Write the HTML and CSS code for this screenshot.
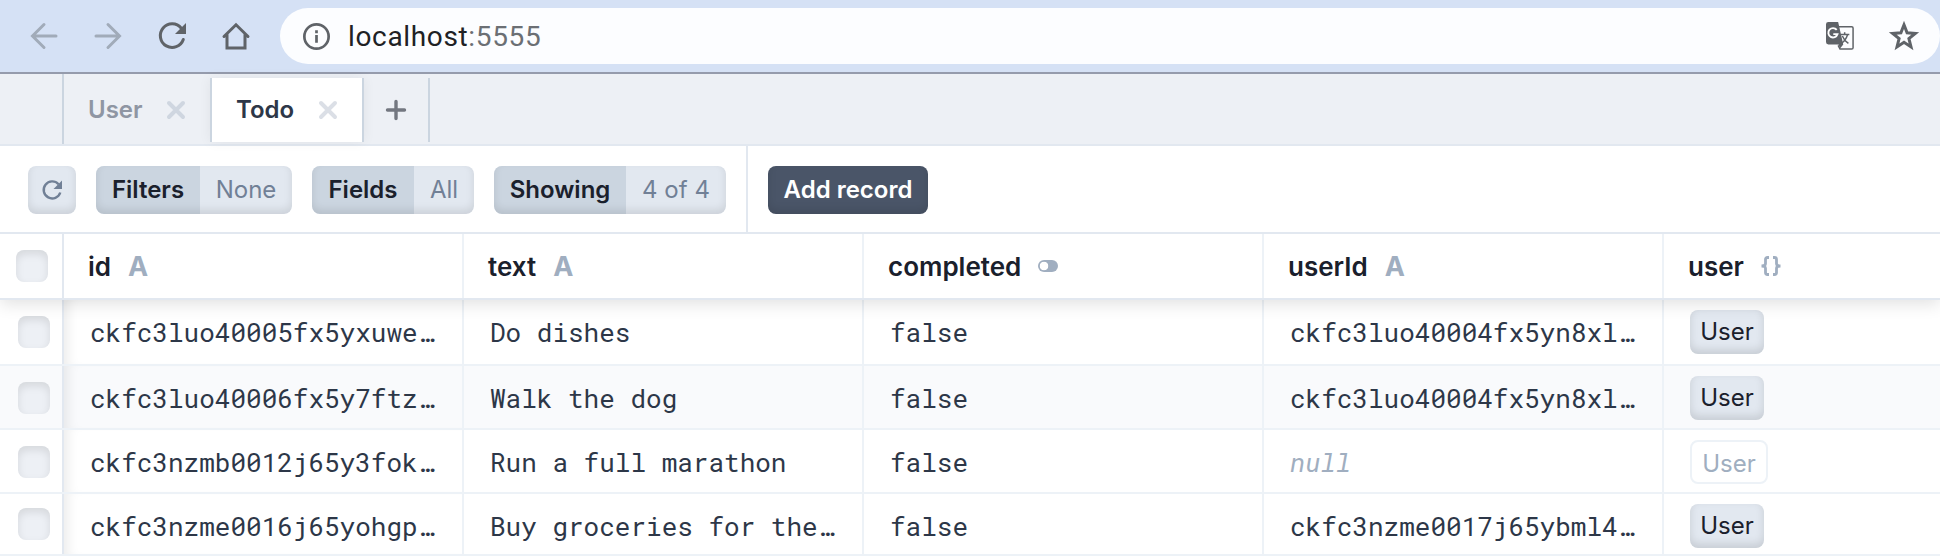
FILE: index.html
```html
<!DOCTYPE html>
<html lang="en">
<head>
<meta charset="utf-8">
<title>Prisma Studio</title>
<link rel="stylesheet" href="styles.css">
</head>
<body>
<header class="browser">
  <svg class="nav-icon nav-off" viewBox="0 0 28 28"><path d="M26 14H3M14 2.500L2.500 14 14 25.500"/></svg>
  <svg class="nav-icon nav-off" viewBox="0 0 28 28"><path d="M2 14h23M14 2.500L25.500 14 14 25.500"/></svg>
  <svg class="nav-icon" viewBox="0 0 28 28"><path d="M25.300 17.500A11.800 11.800 0 1 1 23.300 6.200"/><path class="solid" d="M28 1v11H17z"/></svg>
  <svg class="nav-icon" viewBox="0 0 28 28"><path d="M2 14.500L14 2.800l12 11.700M5 12.500v13.500h18v-13.500"/></svg>
  <div class="address">
    <svg class="info" viewBox="0 0 28 28"><circle cx="14" cy="14" r="12.600"/><path d="M14 12.500v8M14 7.500v3"/></svg>
    <span class="url">localhost<span class="port">:5555</span></span>
    <svg class="translate" viewBox="0 0 30 30"><path class="page" d="M13 5h14.500q1.500 0 1.500 1.500v21q0 1.500-1.500 1.500H15l-2-4"/><path class="solid" d="M2.500 0H13l5.500 24-3.500 4.500L13.500 24h-11Q0 24 0 21.500v-19Q0 0 2.500 0z"/><path class="gee" d="M11.500 8.500A5 5 0 1 0 12.300 13H7.800"/><path class="han" d="M15.500 13.500h9.500M20 11v2.500M23 14q-2 6-6.500 9M17.500 15q2 5 6.500 8"/></svg>
    <svg class="star" viewBox="0 0 30 30"><path d="M15 3.800l3.100 8 8.200.6-6.400 5.200 2.100 8.300-7-4.600-7 4.600 2.100-8.300-6.400-5.200 8.200-.6z"/></svg>
  </div>
</header>

<nav class="tabs">
  <div class="tab-gutter"></div>
  <div class="tab"><span>User</span><svg class="close" viewBox="0 0 18 18"><path d="M2 2l14 14M16 2L2 16"/></svg></div>
  <div class="tab tab-active"><span>Todo</span><svg class="close" viewBox="0 0 18 18"><path d="M2 2l14 14M16 2L2 16"/></svg></div>
  <div class="tab-add"><svg viewBox="0 0 20 20"><path d="M10 1.500v17M1.500 10h17"/></svg></div>
</nav>

<section class="toolbar">
  <div class="group refresh"><svg viewBox="0 0 20 20"><path d="M18.300 12.500A8.500 8.500 0 1 1 16.500 4.200"/><path class="solid" d="M20 .5V9h-8.500z"/></svg></div>
  <div class="group"><span class="key k-filters">Filters</span><span class="value v-filters">None</span></div>
  <div class="group"><span class="key k-fields">Fields</span><span class="value v-fields">All</span></div>
  <div class="group"><span class="key k-showing">Showing</span><span class="value v-showing">4 of 4</span></div>
  <div class="actions"><button class="add">Add record</button></div>
</section>

<main class="grid">
  <div class="row head">
    <div class="cell check"><i class="box"></i></div>
    <div class="cell">id<b class="type">A</b></div>
    <div class="cell">text<b class="type">A</b></div>
    <div class="cell">completed<i class="toggle"></i></div>
    <div class="cell">userId<b class="type">A</b></div>
    <div class="cell">user<svg class="braces" viewBox="0 0 20 20"><path d="M8 1.500H6.500Q4.500 1.500 4.500 3.500V7.500Q4.500 10 .5 10 4.500 10 4.500 12.500v4q0 2 2 2h1.500M12 1.500h1.500q2 0 2 2V7.500q0 2.500 4 2.500-4 0-4 2.500v4q0 2-2 2h-1.500"/></svg></div>
  </div>
  <div class="body">
    <div class="row">
      <div class="cell check"><i class="box"></i></div>
      <div class="cell"><span>ckfc3luo40005fx5yxuwe…</span></div>
      <div class="cell"><span>Do dishes</span></div>
      <div class="cell"><span>false</span></div>
      <div class="cell"><span>ckfc3luo40004fx5yn8xl…</span></div>
      <div class="cell"><span class="chip">User</span></div>
    </div>
    <div class="row mid alt">
      <div class="cell check"><i class="box"></i></div>
      <div class="cell"><span>ckfc3luo40006fx5y7ftz…</span></div>
      <div class="cell"><span>Walk the dog</span></div>
      <div class="cell"><span>false</span></div>
      <div class="cell"><span>ckfc3luo40004fx5yn8xl…</span></div>
      <div class="cell"><span class="chip">User</span></div>
    </div>
    <div class="row mid">
      <div class="cell check"><i class="box"></i></div>
      <div class="cell"><span>ckfc3nzmb0012j65y3fok…</span></div>
      <div class="cell"><span>Run a full marathon</span></div>
      <div class="cell"><span>false</span></div>
      <div class="cell"><span class="null">null</span></div>
      <div class="cell"><span class="chip chip-empty">User</span></div>
    </div>
    <div class="row last">
      <div class="cell check"><i class="box"></i></div>
      <div class="cell"><span>ckfc3nzme0016j65yohgp…</span></div>
      <div class="cell"><span>Buy groceries for the…</span></div>
      <div class="cell"><span>false</span></div>
      <div class="cell"><span>ckfc3nzme0017j65ybml4…</span></div>
      <div class="cell"><span class="chip">User</span></div>
    </div>
  </div>
</main>
</body>
</html>
```
FILE: styles.css
```css
* { box-sizing: border-box; }
body { margin: 0; width: 1940px; height: 557px; overflow: hidden; background: #fff; color: #1a202c; font-family: Inter, "Liberation Sans", sans-serif; font-size: 24px; }
svg { display: block; fill: none; flex: none; overflow: visible; }
svg .solid { stroke: none; }

.browser { display: flex; align-items: center; height: 74px; padding-left: 30px; background: #d5e1f5; border-bottom: 2px solid #959bac; }
.nav-icon { width: 28px; height: 28px; margin: 0 36px 1px 0; stroke: #5f6368; stroke-width: 3; stroke-linecap: round; }
.nav-icon .solid { fill: #5f6368; }
.nav-off { stroke: #a1abb9; }
.address { display: flex; align-items: center; flex: 1; height: 56px; margin-left: -6px; padding: 0 21px 0 23px; background: #fcfdff; border-radius: 28px; }
.info { width: 27px; height: 27px; stroke: #5f6368; stroke-width: 2.800; }
.url { flex: 1; margin-left: 18px; font-family: Roboto, sans-serif; font-size: 28px; letter-spacing: .65px; color: #202124; }
.port { color: #6b6f74; }
.translate { width: 28px; height: 28px; margin-right: 35px; stroke: #5f6368; stroke-width: 1.600; }
.translate .solid { fill: #5f6368; }
.translate .gee { stroke: #fff; stroke-width: 2; }
.star { width: 30px; height: 30px; stroke: #5f6368; stroke-width: 3; }

.tabs { display: flex; height: 72px; background: #edf0f5; border-bottom: 2px solid #e2e8f0; }
.tab-gutter { width: 64px; border-right: 2px solid #cbd5e0; }
.tab { display: flex; align-items: center; justify-content: space-between; width: 146px; height: 64px; margin-top: 4px; padding: 0 25px 0 24px; font-weight: 600; color: #8f96a3; }
.tab span { padding-bottom: 2px; }
.tab-active { width: 154px; background: #fff; color: #2d3748; border: solid #cbd5e0; border-width: 0 2px; box-shadow: 0 0 12px rgba(0,0,0,.06); }
.close { width: 18px; height: 18px; stroke: #cfd6e0; stroke-width: 4; stroke-linecap: round; }
.tab-active .close { stroke: #dbdfe6; }
.tab-add { display: flex; align-items: center; justify-content: center; width: 66px; height: 64px; margin-top: 4px; border-right: 2px solid #cbd5e0; }
.tab-add svg { width: 20px; height: 20px; stroke: #737780; stroke-width: 3.400; stroke-linecap: round; }

.toolbar { display: flex; align-items: center; gap: 20px; height: 88px; padding: 0 28px; border-bottom: 2px solid #e2e8f0; }
.group { position: relative; display: flex; height: 48px; margin-top: 2px; border-radius: 8px; overflow: hidden; background: #e2e8f0; }
.group::after { content: ""; position: absolute; inset: 0; border-radius: 8px; box-shadow: inset 0 -4px 8px rgba(0,0,0,.1); }
.refresh { width: 48px; align-items: center; justify-content: center; }
.refresh svg { width: 20px; height: 20px; stroke: #718096; stroke-width: 2.400; }
.refresh .solid { fill: #718096; }
.key, .value { display: flex; align-items: center; justify-content: center; padding-bottom: 2px; white-space: nowrap; }
.key { font-weight: 600; background: #cbd5e0; }
.value { color: #718096; }
.k-filters { width: 104px; } .v-filters { width: 92px; }
.k-fields { width: 102px; } .v-fields { width: 60px; }
.k-showing { width: 132px; } .v-showing { width: 100px; }
.actions { display: flex; align-items: center; height: 86px; padding: 2px 0 0 20px; border-left: 2px solid #e2e8f0; }
.add { width: 160px; height: 48px; padding: 0 0 2px; border: 0; border-radius: 8px; background: #4a5568; color: #fff; font: 600 24px Inter, sans-serif; box-shadow: inset 0 -4px 8px rgba(0,0,0,.1); }

.row { display: grid; grid-template-columns: 64px repeat(4, 400px) 1fr; height: 64px; border-bottom: 2px solid #edf2f7; }
.cell { display: flex; align-items: center; padding-left: 26px; border-right: 2px solid #edf2f7; white-space: nowrap; }
.cell:last-child { border-right: 0; }
.check { padding-left: 18px; border-color: #e2e8f0; }
.box { width: 32px; height: 32px; border-radius: 8px; background: #edf0f5; box-shadow: inset 0 4px 8px rgba(0,0,0,.1); }
.head { position: relative; height: 66px; font-size: 26px; font-weight: 600; border-color: #e2e8f0; background: #fff; box-shadow: 0 4px 16px rgba(0,0,0,.12); clip-path: inset(0 0 -30px 0); }
.head .cell { padding-left: 24px; }
.head .check { padding-left: 16px; }
.type { margin-left: 17px; font-size: 27px; font-weight: 700; color: #a0aec0; }
.toggle { width: 20px; height: 12px; margin-left: 17px; border-radius: 6px; background: radial-gradient(circle at 6px 6px, #fff 4px, #a0aec0 4.600px); }
.braces { width: 20px; height: 20px; margin-left: 17px; stroke: #a0aec0; stroke-width: 2.800; }
.body .row:first-child { height: 66px; }
.body .last { height: 62px; }
.body .mid .cell { padding-top: 2px; }
.body .last .cell:not(.check) { padding-top: 4px; }
.body .cell { color: #2d3748; font-family: "Roboto Mono", "DejaVu Sans Mono", monospace; font-size: 26px; }
.body .check + .cell { box-shadow: inset 12px 0 12px -8px rgba(0,0,0,.08); }
.alt { background: #f9fafc; }
.body .null { color: #a0aec0; font-style: italic; }
.body .chip { display: flex; align-items: center; justify-content: center; width: 74px; height: 44px; padding-bottom: 2px; border-radius: 8px; background: #e2e8f0; color: #1a202c; font-family: Inter, sans-serif; font-size: 24px; box-shadow: inset 0 -4px 8px rgba(0,0,0,.12); }
.body .chip-empty { width: 78px; padding: 2px 0 0; background: none; border: 2px solid #edf2f7; box-shadow: none; color: #a0aec0; }
```
